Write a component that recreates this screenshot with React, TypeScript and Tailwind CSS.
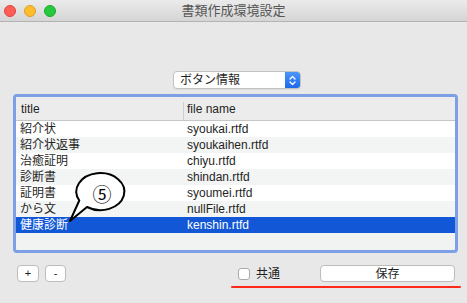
import React from 'react'

const rows = [
    { title: '紹介状', file: 'syoukai.rtfd' },
    { title: '紹介状返事', file: 'syoukaihen.rtfd' },
    { title: '治癒証明', file: 'chiyu.rtfd' },
    { title: '診断書', file: 'shindan.rtfd' },
    { title: '証明書', file: 'syoumei.rtfd' },
    { title: 'から文', file: 'nullFile.rtfd' },
    { title: '健康診断', file: 'kenshin.rtfd' },
]

const font = { fontFamily: '"Liberation Sans", "Noto Sans CJK JP", sans-serif' }

export default function App() {
    const selected = 6

    return (
        <div className="relative w-[467px] h-[303px] overflow-hidden bg-[#e8e8e8] text-[#1f1f1f]" style={font}>
            {/* Title bar */}
            <div className="relative flex items-center h-[22px] bg-gradient-to-b from-[#ebebeb] to-[#d5d5d5] border-b border-[#b3b3b3]">
                <div className="flex items-center gap-[8px] pl-[4px] pt-[1px]">
                    <span className="w-[12px] h-[12px] rounded-full bg-[#fc5d57] border border-[#e0443e]" />
                    <span className="w-[12px] h-[12px] rounded-full bg-[#fdbb2e] border border-[#dea123]" />
                    <span className="w-[12px] h-[12px] rounded-full bg-[#27c840] border border-[#1aab29]" />
                </div>
                <div className="absolute inset-0 flex items-center justify-center text-[13px] text-[#555555] pt-[1px]">
                    書類作成環境設定
                </div>
            </div>

            {/* Popup */}
            <div className="pt-[49px] pl-[173px]">
                <div className="flex w-[128px] h-[18px] bg-white border border-[#c2c2c2] rounded-[4px] overflow-hidden shadow-[0_1px_0_rgba(0,0,0,0.05)]">
                    <div className="flex-1 flex items-center pl-[6px] text-[12px] leading-none">ボタン情報</div>
                    <div className="w-[15px] h-full bg-gradient-to-b from-[#4b95f8] to-[#1d69ea] flex items-center justify-center">
                        <svg width="7" height="11" viewBox="0 0 7 11" fill="none" stroke="white" strokeWidth="1.3" strokeLinecap="round" strokeLinejoin="round">
                            <path d="M1 4 L3.5 1.5 L6 4" />
                            <path d="M1 7 L3.5 9.5 L6 7" />
                        </svg>
                    </div>
                </div>
            </div>

            {/* Table */}
            <div className="ml-[13px] mr-[9px] mt-[5px] h-[159px] border-[3px] border-[#7d9fe6] rounded-[4px] bg-[#f1f2f2] overflow-hidden">
                <div className="flex h-[24px] bg-[#ececec] border-b border-[#c6c6c6] text-[12px]">
                    <div className="w-[167px] flex items-center pl-[5px] pt-[1px]">title</div>
                    <div className="w-px mt-[5px] bg-[#cfcfcf]" />
                    <div className="flex-1 flex items-center pl-[3px] pt-[1px]">file name</div>
                </div>
                {rows.map((r, i) => (
                    <div
                        key={r.title}
                        className={`flex h-[16px] items-center text-[12px] leading-none ${
                            i === selected ? 'bg-[#1157d6] text-white' : i % 2 === 0 ? 'bg-white' : 'bg-[#f3f4f4]'
                        }`}
                    >
                        <div className="w-[168px] pl-[4px]">{r.title}</div>
                        <div className="flex-1 pl-[3px]">{r.file}</div>
                    </div>
                ))}
            </div>

            {/* Bottom controls */}
            <div className="flex items-center mt-[12px] h-[17px]">
                <div className="flex gap-[6px] ml-[17px]">
                    <button className="w-[22px] h-[17px] bg-white border border-[#bcbcbc] rounded-[4px] text-[11px] leading-none flex items-center justify-center">+</button>
                    <button className="w-[21px] h-[17px] bg-white border border-[#bcbcbc] rounded-[4px] text-[11px] leading-none flex items-center justify-center">-</button>
                </div>
                <label className="flex items-center gap-[6px] ml-[172px] text-[12px] whitespace-nowrap">
                    <span className="w-[12px] h-[12px] bg-white border border-[#a9a9a9] rounded-[3px]" />
                    共通
                </label>
                <button className="ml-[40px] w-[135px] h-[17px] bg-white border border-[#bcbcbc] rounded-[4px] text-[12px] leading-none flex items-center justify-center">
                    保存
                </button>
            </div>

            {/* Red underline annotation */}
            <div className="ml-[231px] mt-[4px] w-[230px] h-[2px] bg-[#ff2a1a] rounded-full" />

            {/* Speech bubble annotation */}
            <svg className="absolute left-0 top-0" width="467" height="303" viewBox="0 0 467 303" fill="none">
                <path
                    d="M 79.3 200.5 A 24 18.5 0 1 1 87 207 L 70 221 Z"
                    fill="white"
                    stroke="black"
                    strokeWidth="2"
                    strokeLinejoin="round"
                />
            </svg>
            <div
                className="absolute left-[91px] top-[182px] w-[22px] h-[22px] flex items-center justify-center text-[19px] leading-none text-black"
                style={{ fontFamily: '"Noto Sans CJK JP", sans-serif' }}
            >
                ⑤
            </div>
        </div>
    )
}
